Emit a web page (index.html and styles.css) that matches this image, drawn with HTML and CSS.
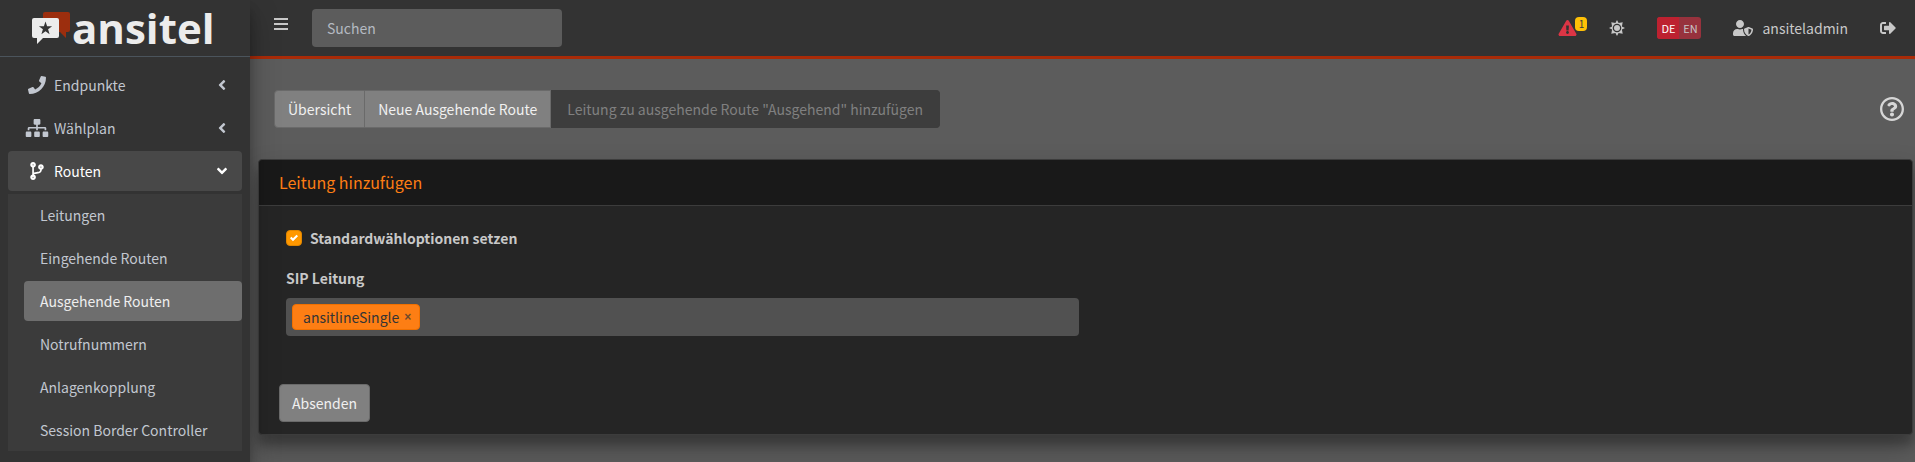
FILE: index.html
```html
<!DOCTYPE html>
<html lang="de">
<head>
<meta charset="utf-8">
<title>ansitel – Leitung hinzufügen</title>
<link rel="stylesheet" href="styles.css">
</head>
<body>
<div class="app">
  <aside class="sidebar">
    <a class="brand" href="#">
      <svg class="brand-icon" viewBox="0 0 38 32" aria-hidden="true">
        <path fill="#9c2e0e" d="M13 0h23q2 0 2 2v16q0 2-2 2h-2v6l-6-6H13q-2 0-2-2V2q0-2 2-2z"/>
        <path fill="#ececec" d="M2 6h23q2 0 2 2v16q0 2-2 2H11l-6 6v-6H2q-2 0-2-2V8q0-2 2-2z"/>
        <path fill="#333" d="M13.500 9.500l1.600 4.800h5l-4 3 1.500 4.900-4.100-3-4.100 3 1.500-4.900-4-3h5z"/>
      </svg>
      <span class="brand-text">ansitel</span>
    </a>
    <nav class="menu">
      <a class="menu-link" href="#">
        <svg class="menu-icon" viewBox="0 0 512 512" aria-hidden="true"><path d="M493.4 24.6l-104-24c-11.3-2.6-22.9 3.3-27.5 13.9l-48 112c-4.2 9.8-1.4 21.3 6.900 28l60.600 49.600c-36 76.700-98.900 140.500-177.200 177.200l-49.600-60.600c-6.800-8.300-18.200-11.100-28-6.900l-112 48C3.900 366.500-2 378.100.6 389.400l24 104C27.100 504.200 36.700 512 48 512c256.100 0 464-207.500 464-464 0-11.200-7.700-20.900-18.600-23.400z"/></svg>
        <span class="menu-label">Endpunkte</span>
        <svg class="menu-arrow" viewBox="0 0 256 512" aria-hidden="true"><path d="M31.7 239l136-136c9.400-9.400 24.600-9.400 33.900 0l22.600 22.600c9.400 9.400 9.400 24.600 0 33.900L127.900 256l96.400 96.400c9.400 9.400 9.400 24.600 0 33.900L201.700 409c-9.400 9.400-24.600 9.400-33.900 0l-136-136c-9.500-9.400-9.500-24.600-.1-34z"/></svg>
      </a>
      <a class="menu-link" href="#">
        <svg class="menu-icon" viewBox="0 0 640 512" aria-hidden="true"><path d="M128 352H32c-17.670 0-32 14.330-32 32v96c0 17.670 14.330 32 32 32h96c17.670 0 32-14.330 32-32v-96c0-17.670-14.330-32-32-32zm-24-80h192v48h48v-48h192v48h48v-57.590c0-21.170-17.230-38.410-38.410-38.410H344v-64h40c17.670 0 32-14.330 32-32V32c0-17.670-14.330-32-32-32H256c-17.670 0-32 14.330-32 32v96c0 17.670 14.330 32 32 32h40v64H94.410C73.230 224 56 241.230 56 262.410V320h48v-48zm264 80h-96c-17.670 0-32 14.330-32 32v96c0 17.670 14.330 32 32 32h96c17.670 0 32-14.330 32-32v-96c0-17.670-14.330-32-32-32zm240 0h-96c-17.670 0-32 14.330-32 32v96c0 17.670 14.330 32 32 32h96c17.670 0 32-14.330 32-32v-96c0-17.670-14.330-32-32-32z"/></svg>
        <span class="menu-label">Wählplan</span>
        <svg class="menu-arrow" viewBox="0 0 256 512" aria-hidden="true"><path d="M31.7 239l136-136c9.400-9.400 24.600-9.400 33.900 0l22.600 22.600c9.400 9.400 9.400 24.600 0 33.900L127.900 256l96.400 96.400c9.400 9.400 9.400 24.600 0 33.900L201.700 409c-9.400 9.400-24.600 9.400-33.900 0l-136-136c-9.500-9.400-9.500-24.600-.1-34z"/></svg>
      </a>
      <a class="menu-link menu-open" href="#">
        <svg class="menu-icon" viewBox="0 0 384 512" aria-hidden="true"><path d="M384 144c0-44.200-35.800-80-80-80s-80 35.800-80 80c0 36.400 24.300 67.100 57.500 76.800-.6 16.100-4.200 28.500-11 36.900-15.400 19.200-49.300 22.400-85.200 25.700-28.200 2.600-57.400 5.400-81.300 16.900v-144c32.500-10.200 56-40.500 56-76.300 0-44.200-35.800-80-80-80S0 35.800 0 80c0 35.800 23.500 66.100 56 76.300v199.300C23.500 365.900 0 396.200 0 432c0 44.200 35.800 80 80 80s80-35.800 80-80c0-34-21.200-63.100-51.200-74.600 3.100-5.200 7.800-9.800 14.900-13.400 16.200-8.200 40.400-10.400 66.100-12.800 42.200-3.900 90-8.400 118.200-43.400 14-17.400 21.100-39.800 21.600-67.900 31.600-10.800 54.400-40.700 54.400-75.900zM80 64c8.800 0 16 7.200 16 16s-7.200 16-16 16-16-7.200-16-16 7.200-16 16-16zm0 384c-8.800 0-16-7.200-16-16s7.200-16 16-16 16 7.200 16 16-7.200 16-16 16zm224-320c8.800 0 16 7.200 16 16s-7.200 16-16 16-16-7.200-16-16 7.200-16 16-16z"/></svg>
        <span class="menu-label">Routen</span>
        <svg class="menu-arrow" viewBox="0 0 256 512" aria-hidden="true"><path d="M31.7 239l136-136c9.400-9.400 24.600-9.400 33.900 0l22.600 22.600c9.400 9.400 9.400 24.600 0 33.900L127.900 256l96.400 96.400c9.400 9.400 9.400 24.600 0 33.900L201.700 409c-9.400 9.400-24.600 9.400-33.900 0l-136-136c-9.500-9.400-9.500-24.600-.1-34z"/></svg>
      </a>
      <div class="submenu">
        <a class="submenu-link" href="#">Leitungen</a>
        <a class="submenu-link" href="#">Eingehende Routen</a>
        <a class="submenu-link submenu-active" href="#">Ausgehende Routen</a>
        <a class="submenu-link" href="#">Notrufnummern</a>
        <a class="submenu-link" href="#">Anlagenkopplung</a>
        <a class="submenu-link" href="#">Session Border Controller</a>
      </div>
    </nav>
  </aside>

  <div class="page">
    <header class="topbar">
      <button class="icon-button toggle" type="button" aria-label="Menü">
        <svg class="icon-bars" viewBox="0 0 14 12" aria-hidden="true"><path d="M0 0h14v2H0zM0 5h14v2H0zM0 10h14v2H0z"/></svg>
      </button>
      <input class="search" type="search" placeholder="Suchen" aria-label="Suchen">
      <div class="tools">
        <a class="alert" href="#" aria-label="Warnungen">
          <svg class="icon-alert" viewBox="0 0 576 512" aria-hidden="true"><path d="M569.517 440.013C587.975 472.007 564.806 512 527.940 512H48.054c-36.937 0-59.999-40.055-41.577-71.987L246.423 23.985c18.467-32.009 64.720-31.951 83.154 0l239.940 416.028zM288 354c-25.405 0-46 20.595-46 46s20.595 46 46 46 46-20.595 46-46-20.595-46-46-46zm-43.673-165.346l7.418 136c.347 6.364 5.609 11.346 11.982 11.346h48.546c6.373 0 11.635-4.982 11.982-11.346l7.418-136c.375-6.874-5.098-12.654-11.982-12.654h-63.383c-6.884 0-12.356 5.780-11.981 12.654z"/></svg>
          <span class="badge">1</span>
        </a>
        <button class="icon-button theme" type="button" aria-label="Farbschema">
          <svg class="icon" viewBox="0 0 16 16" aria-hidden="true">
            <path fill-rule="evenodd" d="M8 0l1.600 3.100 4.100-.8-.8 4.100L16 8l-3.100 1.600.8 4.100-4.100-.8L8 16l-1.600-3.100-4.100.8.8-4.100L0 8l3.100-1.600-.8-4.100 4.100.8zM8 3.700a4.300 4.300 0 1 0 0 8.600 4.300 4.300 0 0 0 0-8.600z"/>
            <circle cx="8" cy="8" r="3"/>
          </svg>
        </button>
        <div class="lang">
          <a class="lang-link lang-active" href="#">DE</a>
          <a class="lang-link" href="#">EN</a>
        </div>
        <a class="user" href="#">
          <svg class="icon-user" viewBox="0 0 640 512" aria-hidden="true"><path d="M622.3 271.100l-115.200-45c-4.100-1.600-12.600-3.700-22.200 0l-115.200 45c-10.700 4.200-17.700 14-17.700 24.900 0 111.600 68.700 188.800 132.900 213.900 9.600 3.700 18 1.600 22.200 0C558.400 489.900 640 420.500 640 296c0-10.900-7-20.700-17.700-24.900zM496 462.400V273.300l95.500 37.300c-5.600 87.100-60.900 135.400-95.500 151.800zM224 256c70.700 0 128-57.300 128-128S294.700 0 224 0 96 57.300 96 128s57.300 128 128 128zm96 40c0-2.500.8-4.800 1.100-7.200-2.500-.1-4.900-.8-7.500-.8h-16.700c-22.200 10.200-46.900 16-72.900 16s-50.600-5.800-72.900-16h-16.700C60.200 288 0 348.200 0 422.400V464c0 26.500 21.500 48 48 48h352c6.800 0 13.300-1.500 19.200-4-54-42.900-99.200-116.700-99.200-212z"/></svg>
          ansiteladmin
        </a>
        <a class="logout" href="#" aria-label="Abmelden">
          <svg class="icon" viewBox="0 0 512 512" aria-hidden="true"><path d="M497 273L329 441c-15 15-41 4.500-41-17v-96H152c-13.300 0-24-10.700-24-24v-96c0-13.300 10.700-24 24-24h136V88c0-21.400 25.900-32 41-17l168 168c9.300 9.400 9.300 24.600 0 34zM192 436v-40c0-6.600-5.400-12-12-12H96c-17.700 0-32-14.300-32-32V160c0-17.700 14.300-32 32-32h84c6.600 0 12-5.400 12-12V76c0-6.600-5.400-12-12-12H96c-53 0-96 43-96 96v192c0 53 43 96 96 96h84c6.600 0 12-5.400 12-12z"/></svg>
        </a>
      </div>
    </header>

    <main class="content">
      <div class="heading">
        <nav class="crumbs">
          <a class="crumb" href="#">Übersicht</a>
          <a class="crumb" href="#">Neue Ausgehende Route</a>
          <span class="crumb crumb-current">Leitung zu ausgehende Route "Ausgehend" hinzufügen</span>
        </nav>
        <button class="icon-button" type="button" aria-label="Hilfe">
          <svg class="icon-help" viewBox="8 8 496 496" aria-hidden="true"><path d="M256 8C119.043 8 8 119.083 8 256c0 136.997 111.043 248 248 248s248-111.003 248-248C504 119.083 392.957 8 256 8zm0 448c-110.532 0-200-89.431-200-200 0-110.495 89.472-200 200-200 110.491 0 200 89.471 200 200 0 110.530-89.431 200-200 200zm107.244-255.200c0 67.052-72.421 68.084-72.421 92.863V300c0 6.627-5.373 12-12 12h-45.647c-6.627 0-12-5.373-12-12v-8.659c0-35.745 27.100-50.034 47.579-61.516 17.561-9.845 28.324-16.541 28.324-29.579 0-17.246-21.999-28.693-39.784-28.693-23.189 0-33.894 10.977-48.942 29.969-4.057 5.120-11.460 6.071-16.666 2.124l-27.824-21.098c-5.107-3.872-6.251-11.066-2.644-16.363C184.846 131.491 214.940 112 261.794 112c49.071 0 101.450 38.304 101.450 88.800zM298 368c0 23.159-18.841 42-42 42s-42-18.841-42-42 18.841-42 42-42 42 18.841 42 42z"/></svg>
        </button>
      </div>

      <form class="card">
        <h1 class="card-title">Leitung hinzufügen</h1>
        <div class="card-body">
          <div class="fields">
            <div class="check">
              <input class="check-input" type="checkbox" id="defaults" checked>
              <label class="label" for="defaults">Standardwähloptionen setzen</label>
            </div>
            <label class="label" for="line">SIP Leitung</label>
            <div class="tags">
              <span class="tag">ansitlineSingle
                <button class="tag-remove" type="button" aria-label="Entfernen">×</button>
              </span>
              <input class="tags-input" type="text" id="line">
            </div>
          </div>
          <button class="submit" type="submit">Absenden</button>
        </div>
      </form>
    </main>
  </div>
</div>
</body>
</html>
```
FILE: styles.css
```css
* {
  box-sizing: border-box;
}

body {
  margin: 0;
  background: #5c5c5c;
  color: #c8c8c8;
  font: 14px/24px "Source Sans Pro", "Noto Sans CJK SC", sans-serif;
}

a {
  color: inherit;
  text-decoration: none;
}

button,
input {
  font: inherit;
  color: inherit;
}

svg {
  display: block;
  fill: currentColor;
}

.app {
  display: flex;
  min-height: 100vh;
}

/* Sidebar */

.sidebar {
  z-index: 1;
  flex: 0 0 250px;
  background: #333;
  color: #c2c7d0;
  box-shadow: 0 14px 28px rgba(0, 0, 0, 0.25), 0 10px 10px rgba(0, 0, 0, 0.22);
}

.brand {
  display: flex;
  align-items: center;
  gap: 2px;
  height: 57px;
  padding: 0 32px;
  border-bottom: 1px solid #4b545c;
}

.brand-icon {
  width: 38px;
  height: 32px;
}

.brand-text {
  color: #ececec;
  font: 700 42px/54px "Open Sans", sans-serif;
}

.menu {
  display: flex;
  flex-direction: column;
  gap: 3px;
  padding: 8px;
}

.menu-link {
  display: flex;
  align-items: center;
  gap: 4px;
  padding: 8px 16px;
  border-radius: 4px;
}

.menu-open {
  background: #484848;
  color: #fff;
}

.menu-icon {
  width: 26px;
  height: 18px;
}

.menu-label {
  flex: 1;
}

.menu-arrow {
  width: 8px;
  height: 16px;
}

.menu-open .menu-arrow {
  transform: rotate(-90deg);
}

.submenu {
  display: flex;
  flex-direction: column;
  gap: 3px;
  padding: 1px 0 1px 16px;
  background: #3b3b3b;
}

.submenu-link {
  padding: 8px 16px;
  border-radius: 4px;
}

.submenu-active {
  background: #6e6e6e;
  color: #eee;
}

/* Top bar */

.page {
  flex: 1;
  min-width: 0;
}

.topbar {
  display: flex;
  align-items: center;
  gap: 24px;
  height: 59px;
  padding: 0 19px 0 24px;
  background: #333;
  border-bottom: 3px solid #a92b08;
}

.icon-button {
  padding: 0;
  border: 0;
  background: none;
}

.toggle {
  align-self: flex-start;
  padding-top: 18px;
}

.icon-bars {
  width: 14px;
  height: 12px;
}

.search {
  width: 250px;
  height: 38px;
  padding: 0 15px;
  border: 0;
  border-radius: 4px;
  background: #5c5c5c;
}

.search::placeholder {
  color: #b5bac2;
}

.tools {
  display: flex;
  align-items: center;
  gap: 32px;
  margin-left: auto;
}

.icon {
  width: 16px;
  height: 16px;
}

.alert {
  position: relative;
  color: #dc3545;
}

.icon-alert {
  width: 19px;
  height: 16px;
}

.badge {
  position: absolute;
  top: -3px;
  right: -10px;
  width: 12px;
  height: 14px;
  border-radius: 4px;
  background: #ffc107;
  color: #343a40;
  font-size: 10px;
  line-height: 14px;
  text-align: center;
}

.lang {
  display: flex;
  overflow: hidden;
  border-radius: 3px;
  background: #97323d;
  font-size: 11px;
  line-height: 22px;
}

.lang-link {
  width: 22px;
  text-align: center;
}

.lang-active {
  background: #bd2130;
  color: #fff;
}

.user {
  display: flex;
  align-items: center;
  gap: 9px;
}

.icon-user {
  width: 20px;
  height: 16px;
}

/* Content */

.content {
  padding: 31px 2px 27px 8px;
}

.heading {
  display: flex;
  align-items: center;
  justify-content: space-between;
  padding: 0 9px 31px 16px;
}

.crumbs {
  display: flex;
}

.crumb {
  padding: 6px 13px;
  border: 1px solid #6a6a6a;
  background: #808080;
  color: #f0f0f0;
}

.crumb + .crumb {
  border-left: 0;
}

.crumb:first-child {
  border-radius: 4px 0 0 4px;
}

.crumb-current {
  padding: 6px 16px;
  border-color: #3d3d3d;
  border-radius: 0 4px 4px 0;
  background: #3d3d3d;
  color: #808080;
}

.icon-help {
  width: 24px;
  height: 24px;
  color: #d6d6d6;
}

.card {
  border: 1px solid #3c3c3c;
  border-radius: 4px;
  background: #252525;
  box-shadow: 0 14px 28px rgba(0, 0, 0, 0.25), 0 10px 10px rgba(0, 0, 0, 0.22);
}

.card-title {
  margin: 0;
  padding: 10px 20px 11px;
  border-bottom: 1px solid #3c3c3c;
  border-radius: 4px 4px 0 0;
  background: #191919;
  color: #fd7e14;
  font-size: 16px;
  font-weight: 400;
  line-height: 24px;
}

.card-body {
  padding: 20px 20px 12px;
}

.fields {
  display: flex;
  flex-direction: column;
  width: 50%;
  padding: 0 7px;
}

.check {
  display: flex;
  align-items: center;
  gap: 8px;
  margin-bottom: 16px;
}

.check-input {
  appearance: none;
  width: 16px;
  height: 16px;
  margin: 0;
  border: 1px solid #e08600;
  border-radius: 4px;
  background: #ff9800 url("data:image/svg+xml,%3Csvg xmlns='http://www.w3.org/2000/svg' viewBox='0 0 8 8'%3E%3Cpath fill='%23fff' d='M6.564.75l-3.590 3.612-1.538-1.550L0 4.260 2.974 7.250 8 2.193z'/%3E%3C/svg%3E") center / 8px no-repeat;
}

.label {
  font-weight: 700;
}

.tags {
  display: flex;
  align-items: center;
  gap: 8px;
  height: 38px;
  margin-top: 8px;
  padding: 0 6px;
  border-radius: 4px;
  background: #515151;
}

.tag {
  display: flex;
  align-items: center;
  gap: 5px;
  padding: 0 8px 0 10px;
  border: 1px solid #f07000;
  border-radius: 4px;
  background: #fd7e14;
  color: #343434;
}

.tag-remove {
  padding: 0;
  border: 0;
  background: none;
  font: 700 12px/24px "Liberation Sans", sans-serif;
  opacity: 0.7;
}

.tags-input {
  flex: 1;
  min-width: 0;
  border: 0;
  outline: 0;
  background: none;
}

.submit {
  margin-top: 48px;
  padding: 6px 12px;
  border: 1px solid #6a6a6a;
  border-radius: 4px;
  background: #808080;
  color: #f0f0f0;
}
```
